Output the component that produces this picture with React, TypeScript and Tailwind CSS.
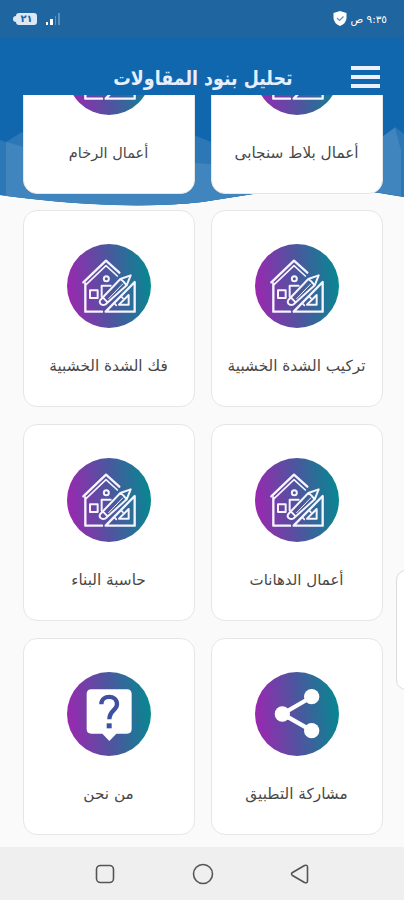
import React from "react";

const white = "#f6f4ff";

function HouseIcon() {
  return (
    <g fill="none" stroke={white} strokeWidth="7" strokeLinejoin="round" strokeLinecap="round">
      <path d="M98 143L166 78L206 114" strokeWidth="7" />
      <path d="M107 149L166 93L200 124" strokeWidth="5" />
      <path d="M104 146V231H154" />
      <rect x="118" y="167" width="23" height="23" strokeWidth="6" />
      <circle cx="167" cy="132" r="7.500" strokeWidth="6" />
      <path d="M153 186V153H180" strokeWidth="6" />
      <path d="M165 231L252 142V231Z" />
      <path d="M205 210L234 181V210Z" strokeWidth="6" />
      <path d="M192 207L197 212M212 186L217 191" strokeWidth="5" />
      <path d="M149 196L209 133L240 122L228 152L165 209Q155 214 149 207Q145 202 149 196ZM209 133Q220 140 228 152M157 189L171 203" strokeWidth="6" />
      <path d="M174 192L216 148" strokeWidth="3" />
    </g>
  );
}

function ShareGlyph() {
  return (
    <g fill="#fff" stroke="#fff">
      <path d="M220 110L132 161L220 211" fill="none" strokeWidth="13" />
      <g stroke="none">
        <circle cx="220" cy="109" r="23" />
        <circle cx="132" cy="161" r="23" />
        <circle cx="220" cy="211" r="23" />
      </g>
    </g>
  );
}

function AboutGlyph() {
  return (
    <g>
      <path d="M122 87H229Q243 87 243 101V206Q243 220 229 220H197L176 242L155 220H122Q108 220 108 206V101Q108 87 122 87Z" fill="#fff" />
      <path d="M152 132C152 102 199 102 199 132C199 150 176 150 176 177" fill="none" stroke="#3f50a0" strokeWidth="13" />
      <rect x="168" y="189" width="15" height="15" fill="#3f50a0" />
    </g>
  );
}

type Kind = "house" | "share" | "about";

function Badge({ kind, id }: { kind: Kind; id: string }) {
  return (
    <svg className="h-[84px] w-[84px] shrink-0" viewBox={kind === "house" ? "49 28 252 252" : kind === "share" ? "43 35 252 252" : "49 35 252 252"}>
      <defs>
        <linearGradient id={id} x1="0" x2="1" y1="0.6" y2="0.5">
          <stop offset="0" stopColor="#9c27b0" />
          <stop offset="0.5" stopColor="#4f549f" />
          <stop offset="1" stopColor="#078791" />
        </linearGradient>
      </defs>
      <circle cx={kind === "share" ? 169 : 175} cy={kind === "house" ? 154 : 161} r="126" fill={`url(#${id})`} />
      {kind === "house" ? <HouseIcon /> : kind === "share" ? <g transform="translate(-7 0)"><ShareGlyph /></g> : <AboutGlyph />}
    </svg>
  );
}

const items: { label: string; kind: Kind; size: string }[] = [
  { label: "أعمال بلاط سنجابى", kind: "house", size: "text-[15.300px]" },
  { label: "أعمال الرخام", kind: "house", size: "text-[14.500px]" },
  { label: "تركيب الشدة الخشبية", kind: "house", size: "text-[15.300px]" },
  { label: "فك الشدة الخشبية", kind: "house", size: "text-[15.300px]" },
  { label: "أعمال الدهانات", kind: "house", size: "text-[15px]" },
  { label: "حاسبة البناء", kind: "house", size: "text-[15.300px]" },
  { label: "مشاركة التطبيق", kind: "share", size: "text-[15.300px]" },
  { label: "من نحن", kind: "about", size: "text-[15.300px]" },
];

export default function App() {
  return (
    <div dir="rtl" className="relative flex h-[900px] w-[404px] flex-col overflow-hidden bg-[#fafafa] font-['DejaVu_Sans',sans-serif]">
      <div className="flex h-[37px] shrink-0 items-center justify-between bg-[#1f659f] pl-[13px] pr-[17px] text-white">
        <div className="flex items-center gap-[3px]">
          <span className="text-[10.500px] leading-4">٩:٣٥ ص</span>
          <svg className="h-[15px] w-[14px]" viewBox="0 0 14 15">
            <path d="M7 0L13.500 2V7Q13.500 12 7 15Q.5 12 .5 7V2Z" fill="#fff" />
            <path d="M4 7L6.500 9.500L10.500 5.500" fill="none" stroke="#5f8fb8" strokeWidth="1.200" />
          </svg>
        </div>
        <div className="flex items-center gap-[9px]" dir="ltr">
          <div className="flex items-center">
            <div className="h-[6px] w-[3px] rounded-l bg-[#dce8f5]" />
            <div className="flex h-[12px] w-[21px] items-center justify-center rounded-[3px] bg-[#dce8f5] text-[10px] font-bold leading-none text-[#1f659f]">٢١</div>
          </div>
          <div className="flex h-[12px] items-end gap-[2px]">
            <i className="h-[3px] w-[2px] bg-white" />
            <i className="h-[6px] w-[3px] bg-white" />
            <i className="h-[9px] w-[1px] bg-[#5c8fba]" />
            <i className="h-[12px] w-[2px] bg-[#5c8fba]" />
          </div>
        </div>
      </div>
      <header className="flex h-[58px] shrink-0 items-center bg-[#1167ae] pr-[24px] pt-[22px]">
        <div className="flex w-[29px] flex-col gap-[5px]">
          <div className="h-1 bg-[#e9f1ff]" />
          <div className="h-1 bg-[#e9f1ff]" />
          <div className="h-1 bg-[#e9f1ff]" />
        </div>
        <h1 className="mr-[58px] mt-[2px] origin-right scale-x-[0.872] whitespace-nowrap text-[20px] font-bold leading-7 text-[#e6efff]">تحليل بنود المقاولات</h1>
      </header>
      <main className="relative h-[752px] shrink-0 overflow-hidden">
        <svg className="absolute left-0 top-0 h-[115px] w-[404px]" viewBox="0 95 404 115">
          <path d="M0 95H404V197Q330 183 260 193L202 202Q120 211 0 195Z" fill="#1167ae" />
          <path d="M0 140L6 142L22 132L80 170L194 135L211 142L300 170L382 137L395 127L404 134V197Q330 183 260 193L202 202Q120 211 0 195Z" fill="#2c77b6" />
          <path d="M6 142L24 147V180H194V163L211 164V185H260V193L202 202Q120 211 6 196ZM382 137L395 128L401 150V196L370 191V180H382Z" fill="#4085be" />
        </svg>
        <div className="relative -mt-[98.500px] grid grid-cols-[172px_172px] justify-start gap-x-4 gap-y-[16.700px] pr-[21.500px]">
          {items.map((it, i) => (
            <div key={it.label} className="flex h-[197px] flex-col items-center rounded-[14px] border border-[#e6e6e6] bg-white pt-[33px]">
              <Badge kind={it.kind} id={`grad-${i}`} />
              <div className={`mt-[26px] whitespace-nowrap leading-6 text-[#484848] ${it.size}`}>{it.label}</div>
            </div>
          ))}
        </div>
      </main>
      <nav className="flex h-[53px] shrink-0 items-center justify-between bg-[#efefef] pl-[95px] pr-[94px]" dir="ltr">
        <svg width="20" height="20" fill="none" stroke="#555" strokeWidth="1.600"><rect x="1.500" y="1.500" width="17" height="17" rx="4" /></svg>
        <svg width="22" height="22" fill="none" stroke="#555" strokeWidth="1.600"><circle cx="11" cy="11" r="9.500" /></svg>
        <svg width="20" height="22" fill="none" stroke="#555" strokeWidth="1.600" strokeLinejoin="round"><path d="M2.500 9.500L14.500 2.500Q17.500 1.500 17.500 4V18Q17.500 20.500 14.500 19.500L2.500 12.500Q.5 11 2.500 9.500Z" /></svg>
      </nav>
      <div className="absolute right-[-12px] top-[570px] h-[120px] w-[20px] rounded-[14px] border border-[#dcdcdc] bg-white" />
    </div>
  );
}
